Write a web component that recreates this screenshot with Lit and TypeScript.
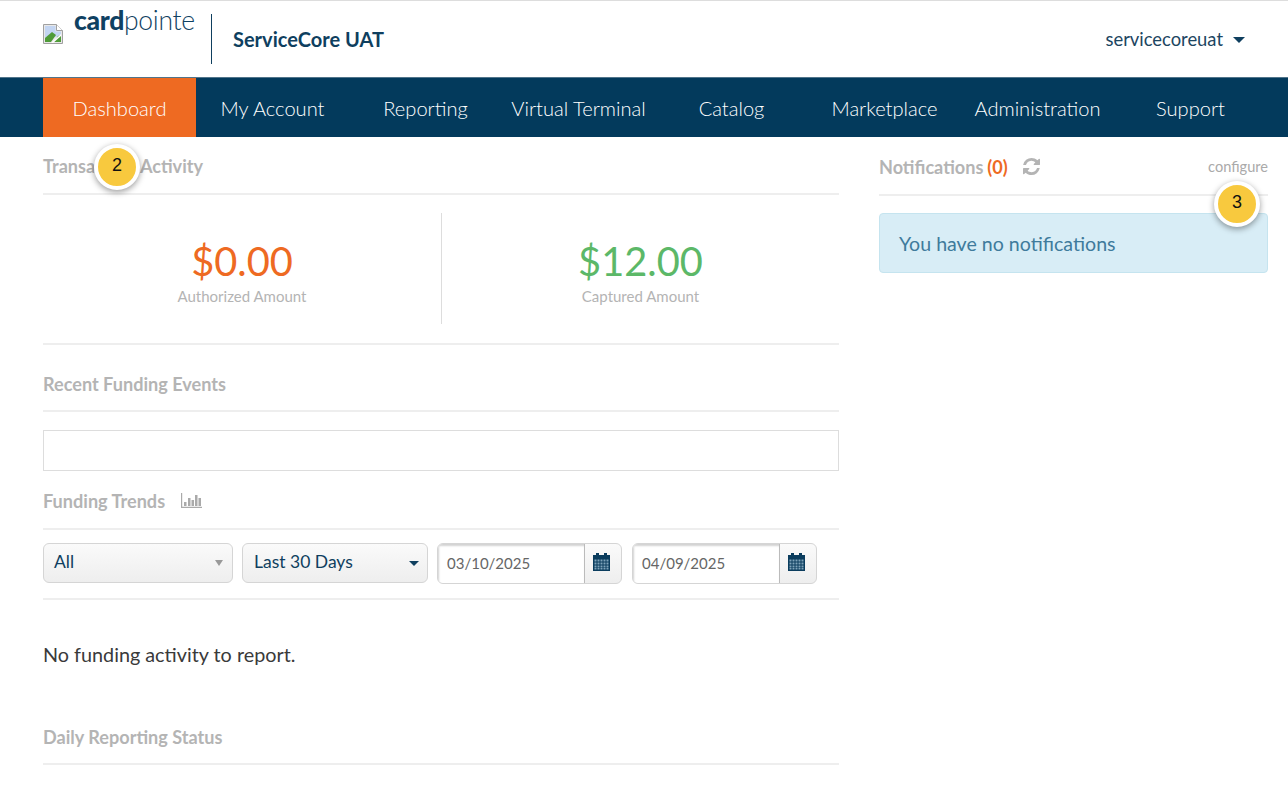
import { LitElement, html, css, svg } from "lit";
import { customElement } from "lit/decorators.js";

const calendar = html`<svg class="cal" viewBox="0 0 17 18" width="17" height="18">
  <path fill="#0b3d5e" d="M0 2h3V0h3v2h5V0h3v2h3v16H0z"/>
  <g fill="#7fa3b9">
    ${[1.5, 4.5, 7.5, 10.5, 13.5].map((x) => [6.5, 9.5, 12.5, 15].map((y) => svg`<rect x="${x}" y="${y}" width="2" height="${y === 15 ? 1.5 : 2}"/>`))}
  </g>
</svg>`;

@customElement("app-root")
export class AppRoot extends LitElement {
  static styles = css`
    :host { display: block; font-family: Lato, "Open Sans", sans-serif; color: #333; height: 786px; overflow: hidden; background: #fff; position: relative; }
    .top { height: 76px; border-top: 1px solid #ddd; padding: 0 43px; display: flex; align-items: stretch; }
    .brand { width: 168px; position: relative; display: flex; }
    .broken { margin-top: 23px; }
    .logo { position: absolute; left: 31px; top: 3px; font-size: 26.5px; line-height: 32px; color: #0f4162; letter-spacing: -0.3px; white-space: nowrap; }
    .logo b { font-weight: 900; }
    .logo span { font-weight: 300; }
    .divider { width: 1px; height: 50px; background: #0f3f5f; margin-top: 13px; }
    .org { margin-left: 21px; font-size: 20px; font-weight: 700; color: #0f3f5f; line-height: 76px; }
    .user { margin-left: auto; font-size: 18.4px; color: #1c4561; line-height: 76px; display: flex; align-items: center; gap: 10px; }
    .caret { width: 0; height: 0; border-left: 6px solid transparent; border-right: 6px solid transparent; border-top: 6px solid #0f3f5f; margin-top: 2px; }
    nav { height: 59px; background: #033a5c; border-top: 1px solid #51748a; padding: 0 21px 0 43px; display: grid; grid-template-columns: repeat(8, 153px); }
    nav a { font-size: 20.1px; font-weight: 300; color: #fff; text-align: center; padding-top: 2px; line-height: 57px; white-space: nowrap; }
    nav a.on { background: #ee6a22; }
    .main { display: grid; grid-template-columns: 796px 389px; column-gap: 40px; padding-left: 43px; }
    .head { box-sizing: border-box; height: 58px; padding-top: 2px; border-bottom: 2px solid #eee; display: flex; align-items: center; font-size: 18.1px; font-weight: 700; color: #b4b4b4; white-space: nowrap; }
    .stats { display: grid; grid-template-columns: 398px 398px; padding: 18px 0 19px; border-bottom: 2px solid #eee; }
    .stat { height: 111px; text-align: center; }
    .stat + .stat { border-left: 1px solid #ddd; }
    .amt { font-size: 39.8px; line-height: 48px; margin-top: 24px; }
    .amt.o { color: #ee6a22; }
    .amt.g { color: #5cb868; }
    .lbl { font-size: 15px; color: #b4b4b4; line-height: 20px; margin-top: 1px; }
    .head.tall { height: 67px; padding-top: 12px; }
    .box { margin-top: 18px; height: 39px; border: 1px solid #ddd; }
    .head.ft { height: 59px; }
    .chart { margin-left: 16px; }
    .filters { display: flex; height: 70px; padding-top: 13px; box-sizing: border-box; border-bottom: 2px solid #eee; }
    .sel { height: 38px; box-sizing: content-box; border: 1px solid #d5d5d5; border-radius: 6px; background: linear-gradient(#fafafa, #eee); display: flex; align-items: center; padding: 0 9px 0 10px; font-size: 17.5px; color: #0f3f5f; }
    .sel b { font-weight: 400; margin-bottom: 3px; }
    .s1 { width: 169px; margin-right: 9px; }
    .s2 { margin-right: 9px; padding-right: 8px; width: 166px; }
    .s2 b { margin-left: 1px; }
    .sel i { margin-left: auto; width: 0; height: 0; border-left: 5px solid transparent; border-right: 5px solid transparent; border-top: 5px solid #0f3f5f; }
    .s1 i { border-left-width: 4px; border-right-width: 4px; border-top: 6px solid #999; }
    .date { display: flex; height: 39px; width: 183px; margin-right: 10px; border: 1px solid #d5d5d5; border-radius: 6px; overflow: hidden; background: linear-gradient(#fafafa, #eee); }
    .date span { flex: 0 0 147px; box-sizing: border-box; height: 100%; background: #fff; border-right: 1px solid #bbb; box-shadow: inset 1px 2px 2px rgba(0,0,0,.18); padding-left: 9px; font-size: 15px; line-height: 38px; color: #666; }
    .date div { flex: 1; display: flex; align-items: center; justify-content: center; padding: 0 3px 3px 0; }
    .none { font-size: 19.8px; color: #3a3a3a; line-height: 28px; padding-top: 40px; height: 70px; }
    .head.dr { height: 55px; padding-top: 0; }
    .head .n { color: #ee6a22; margin-left: 4px; }
    .head .ref { margin-left: 15px; }
    .cfg { margin-left: auto; font-size: 14.6px; font-weight: 400; color: #aaa; }
    .side .head { height: 59px; }
    .alert { margin-top: 17px; height: 58px; border: 1px solid #c5e4ef; border-radius: 4px; background: #d8edf6; color: #3f7b9c; font-size: 19.6px; line-height: 60px; padding-left: 19px; }
    .badge { position: absolute; width: 38px; height: 38px; border-radius: 50%; background: #f8c93e; border: 4px solid #fff; box-shadow: 0 2px 6px rgba(0,0,0,.4); font-family: "Liberation Sans", Arial, sans-serif; font-size: 18px; line-height: 34px; text-align: center; color: #111; }
    .b2 { left: 94px; top: 144px; }
    .b3 { left: 1214px; top: 181px; }
  `;

  render() {
    const items = ["Dashboard", "My Account", "Reporting", "Virtual Terminal", "Catalog", "Marketplace", "Administration", "Support"];
    return html`
      <header class="top">
        <div class="brand">
          <svg class="broken" width="20" height="20" viewBox="0 0 20 20">
            <path d="M.5.5h13l6 6v13H.5z" fill="#e8e8e8" stroke="#a0a0a0"/>
            <path d="M13.5.5v6h6" fill="#fff" stroke="#a0a0a0"/>
            <path d="M2 2h10.500v5.500H18v5L2 14z" fill="#c3d5f2"/>
            <path d="M2 18v-4l7-6 4 3-5 7z" fill="#4f9b38"/>
            <path d="M15 12l3-1v7h-7z" fill="#4f9b38"/>
            <path d="M8 19l10-9v2l-8 7z" fill="#fff"/>
          </svg>
          <div class="logo"><b>card</b><span>pointe</span></div>
        </div>
        <div class="divider"></div>
        <div class="org">ServiceCore UAT</div>
        <div class="user">servicecoreuat <span class="caret"></span></div>
      </header>
      <nav>${items.map((t, i) => html`<a class=${i === 0 ? "on" : ""}>${t}</a>`)}</nav>
      <div class="main">
        <section>
          <div class="head">Transaction Activity</div>
          <div class="stats">
            <div class="stat"><div class="amt o">$0.00</div><div class="lbl">Authorized Amount</div></div>
            <div class="stat"><div class="amt g">$12.00</div><div class="lbl">Captured Amount</div></div>
          </div>
          <div class="head tall">Recent Funding Events</div>
          <div class="box"></div>
          <div class="head ft">Funding Trends
            <svg class="chart" width="21" height="15" viewBox="0 0 21 15"><path fill="#aaa" d="M0 0h1.200v13.800H21V15H0zM3 9h2.500v4H3zM7 5h2.500v8H7zM10.500 7h2.500v6h-2.500zM14 2h2.500v11H14zM17.500 5H20v8h-2.500z"/></svg>
          </div>
          <div class="filters">
            <div class="sel s1"><b>All</b><i></i></div>
            <div class="sel s2"><b>Last 30 Days</b><i></i></div>
            <div class="date"><span>03/10/2025</span><div>${calendar}</div></div>
            <div class="date"><span>04/09/2025</span><div>${calendar}</div></div>
          </div>
          <div class="none">No funding activity to report.</div>
          <div class="head dr">Daily Reporting Status</div>
        </section>
        <aside class="side">
          <div class="head">Notifications <span class="n">(0)</span>
            <svg class="ref" width="17" height="17" viewBox="0 0 1536 1536"><path fill="#b4b4b4" d="M1511 928q0 5-1 7-64 268-268 434.500T764 1536q-146 0-282.500-55T238 1324l-129 129q-19 19-45 19t-45-19-19-45V960q0-26 19-45t45-19h448q26 0 45 19t19 45-19 45l-137 137q71 66 161 102t187 36q134 0 250-65t186-179q11-17 53-117 8-23 30-23h192q13 0 22.500 9.500t9.500 22.500zm25-800v448q0 26-19 45t-45 19h-448q-26 0-45-19t-19-45 19-45l138-138Q969 256 768 256q-134 0-250 65T332 500q-11 17-53 117-8 23-30 23H50q-13 0-22.500-9.500T18 608v-7q65-268 270-434.500T768 0q146 0 284 55.500T1297 212l130-129q19-19 45-19t45 19 19 45z"/></svg>
            <span class="cfg">configure</span>
          </div>
          <div class="alert">You have no notifications</div>
        </aside>
      </div>
      <div class="badge b2">2</div>
      <div class="badge b3">3</div>
    `;
  }
}
